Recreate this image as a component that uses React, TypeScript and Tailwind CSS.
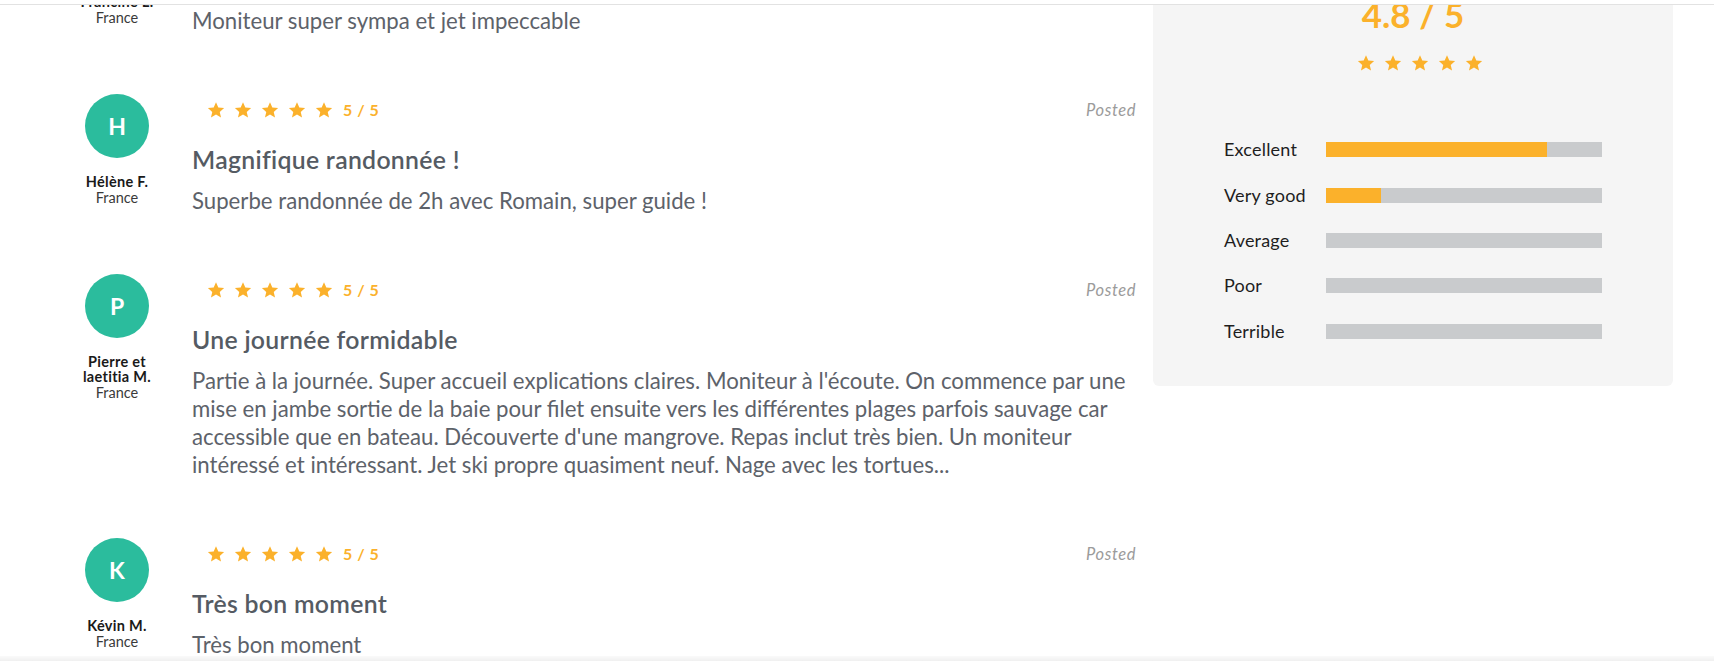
import React from "react";

const ORANGE = "#fbb12b";

function Star({ size = 18 }: { size?: number }) {
  return (
    <svg width={size} height={size} viewBox="0 0 24 24" className="shrink-0">
      <path
        d="M12 1.6l3.1 7.1 7.7.7-5.8 5.1 1.7 7.6L12 18.1l-6.7 4 1.7-7.6L1.2 9.4l7.7-.7z"
        fill={ORANGE}
      />
    </svg>
  );
}

type Review = {
  initial: string;
  name: string[];
  title: string;
  body: string;
};

const reviews: Review[] = [
  {
    initial: "F",
    name: ["Francine L."],
    title: "Super moment",
    body: "Moniteur super sympa et jet impeccable",
  },
  {
    initial: "H",
    name: ["Hélène F."],
    title: "Magnifique randonnée !",
    body: "Superbe randonnée de 2h avec Romain, super guide !",
  },
  {
    initial: "P",
    name: ["Pierre et", "laetitia M."],
    title: "Une journée formidable",
    body: "Partie à la journée. Super accueil explications claires. Moniteur à l'écoute. On commence par une mise en jambe sortie de la baie pour filet ensuite vers les différentes plages parfois sauvage car accessible que en bateau. Découverte d'une mangrove. Repas inclut très bien. Un moniteur intéressé et intéressant. Jet ski propre quasiment neuf. Nage avec les tortues...",
  },
  {
    initial: "K",
    name: ["Kévin M."],
    title: "Très bon moment",
    body: "Très bon moment",
  },
];

function ReviewRow({ r }: { r: Review }) {
  return (
    <div className="flex pb-[59px]">
      <div className="flex w-[80px] shrink-0 flex-col items-center">
        <div className="flex h-[64px] w-[64px] items-center justify-center rounded-full bg-[#2bbc9d] text-[23px] font-bold text-white">
          {r.initial}
        </div>
        <div className="mt-[16px] text-center text-[14.5px] font-bold leading-[15px] tracking-[0.3px] text-[#1a1a1a]">
          {r.name.map((n) => (
            <div key={n} className="whitespace-nowrap">
              {n}
            </div>
          ))}
        </div>
        <div className="text-[14.5px] leading-[17px] text-[#3a3a3a]">France</div>
      </div>
      <div className="ml-[35px] flex-1">
        <div className="flex h-[32px] items-center justify-between">
          <div className="flex items-center pl-[15px]">
            <div className="flex items-center gap-[9px]">
              <Star />
              <Star />
              <Star />
              <Star />
              <Star />
            </div>
            <span className="ml-[10px] text-[16px] font-bold tracking-[0.5px] text-[#fbb12b]">
              5 / 5
            </span>
          </div>
          <span className="text-[16.5px] italic tracking-[0.6px] text-[#9b9b9b]">Posted</span>
        </div>
        <div className="mt-[20px] text-[24.8px] font-semibold leading-[28px] tracking-[0.3px] text-[#555b63]">
          {r.title}
        </div>
        <p className="mt-[13px] text-[22.2px] leading-[28px] text-[#5d626a]">{r.body}</p>
      </div>
    </div>
  );
}

const bars = [
  { label: "Excellent", pct: 80 },
  { label: "Very good", pct: 20 },
  { label: "Average", pct: 0 },
  { label: "Poor", pct: 0 },
  { label: "Terrible", pct: 0 },
];

export default function App() {
  return (
    <div className="relative h-[661px] w-[1714px] overflow-hidden bg-white font-['Lato',sans-serif]">
      <div className="flex items-start">
        <div className="-mt-[86px] ml-[77px] w-[1059px] shrink-0">
          {reviews.map((r) => (
            <ReviewRow key={r.initial} r={r} />
          ))}
        </div>
        <div className="-mt-[20px] ml-[17px] w-[520px] shrink-0 rounded-b-[6px] bg-[#f5f5f5] px-[71px] pb-[32px] pt-[15px]">
          <div className="text-center text-[35px] font-bold leading-[38px] text-[#fbb12b]">4.8 / 5</div>
          <div className="mt-[20px] flex h-[20px] items-center justify-center gap-[9px] pl-[14px]">
            <Star />
            <Star />
            <Star />
            <Star />
            <Star />
          </div>
          <div className="mt-[54px]">
            {bars.map((b) => (
              <div key={b.label} className="flex h-[45.4px] items-center">
                <div className="w-[102px] shrink-0 text-[18px] tracking-[0.2px] text-[#1e1e1e]">{b.label}</div>
                <div className="h-[15px] flex-1 bg-[#c9cbcd]">
                  <div className="h-full bg-[#fbb12b]" style={{ width: `${b.pct}%` }} />
                </div>
              </div>
            ))}
          </div>
        </div>
      </div>
      <div className="absolute left-0 right-0 top-0 h-[5px] border-b border-[#e2e2e2] bg-white" />
      <div className="absolute bottom-0 left-0 right-0 h-[5px] bg-gradient-to-b from-[#fafafa] to-[#f0f0f0]" />
    </div>
  );
}
